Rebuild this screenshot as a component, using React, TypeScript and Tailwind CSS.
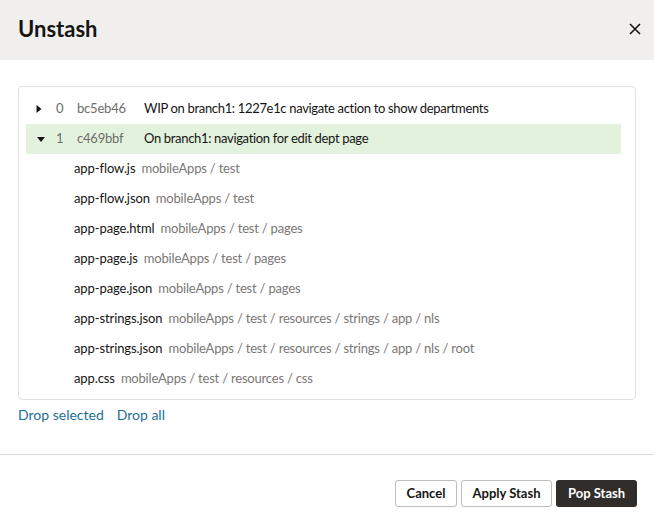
import React from "react";

const files: [string, string][] = [
  ["app-flow.js", "mobileApps / test"],
  ["app-flow.json", "mobileApps / test"],
  ["app-page.html", "mobileApps / test / pages"],
  ["app-page.js", "mobileApps / test / pages"],
  ["app-page.json", "mobileApps / test / pages"],
  ["app-strings.json", "mobileApps / test / resources / strings / app / nls"],
  ["app-strings.json", "mobileApps / test / resources / strings / app / nls / root"],
  ["app.css", "mobileApps / test / resources / css"],
];

function TriRight() {
  return (
    <svg width="6" height="8" viewBox="0 0 6 8" className="block">
      <path d="M0.5 0 L5.5 4 L0.5 8 Z" fill="#161513" />
    </svg>
  );
}
function TriDown() {
  return (
    <svg width="8" height="5" viewBox="0 0 8 5" className="block">
      <path d="M0 0 L8 0 L4 5 Z" fill="#161513" />
    </svg>
  );
}

export default function App() {
  return (
    <div
      className="w-[654px] h-[519px] bg-white flex flex-col text-[#161513]"
      style={{ fontFamily: 'Lato, "Noto Sans", sans-serif' }}
    >
      <div className="h-[60px] bg-[#f1efed] flex items-center justify-between pl-[18px] pr-[12px] shrink-0">
        <div className="text-[22px] font-bold leading-none pb-[2px]">Unstash</div>
        <svg width="12" height="12" viewBox="0 0 12 12" className="mr-[1px] mb-[2px]">
          <path d="M1 1 L11 11 M11 1 L1 11" stroke="#161513" strokeWidth="1.6" />
        </svg>
      </div>
      <div className="flex-1 flex flex-col px-[18px] pt-[26px]">
        <div className="border border-[#e4e2e0] rounded-[4px] h-[314px] pt-[7px] px-[7px]">
          <div className="h-[30px] flex items-center text-[13px]">
            <div className="w-[30px] flex justify-end pr-[14px]"><TriRight /></div>
            <div className="w-[21px] text-[#6f6c69]">0</div>
            <div className="w-[67px] text-[#6f6c69] tracking-[-0.2px]">bc5eb46</div>
            <div className="tracking-[-0.33px]">WIP on branch1: 1227e1c navigate action to show departments</div>
          </div>
          <div className="h-[30px] flex items-center text-[13px] bg-[#e3f2dd] mr-[7px]">
            <div className="w-[30px] flex justify-end pr-[11px]"><TriDown /></div>
            <div className="w-[21px] text-[#6f6c69]">1</div>
            <div className="w-[67px] text-[#6f6c69] tracking-[-0.2px]">c469bbf</div>
            <div className="tracking-[-0.33px]">On branch1: navigation for edit dept page</div>
          </div>
          {files.map(([name, path], i) => (
            <div key={i} className="h-[30px] flex items-center pl-[48px] text-[13px]">
              <span className="text-[#161513] tracking-[-0.1px]">{name}</span>
              <span className="text-[#7a7876] ml-[6px] tracking-[-0.2px]">{path}</span>
            </div>
          ))}
        </div>
        <div className="flex gap-[13px] mt-[5px] text-[14px] text-[#1c6f94] leading-[20px]">
          <span>Drop selected</span>
          <span>Drop all</span>
        </div>
      </div>
      <div className="border-t border-[#dcdad7] h-[65px] shrink-0 flex items-start justify-end gap-[4px] pt-[25px] pr-[17px]">
        <button className="h-[27px] w-[62px] rounded-[3px] border border-[#bfbcb9] bg-white text-[13px] font-bold text-[#161513]">Cancel</button>
        <button className="h-[27px] w-[91px] rounded-[3px] border border-[#bfbcb9] bg-white text-[13px] font-bold text-[#161513]">Apply Stash</button>
        <button className="h-[27px] w-[81px] rounded-[3px] bg-[#312d2a] text-[13px] font-bold text-white">Pop Stash</button>
      </div>
    </div>
  );
}
